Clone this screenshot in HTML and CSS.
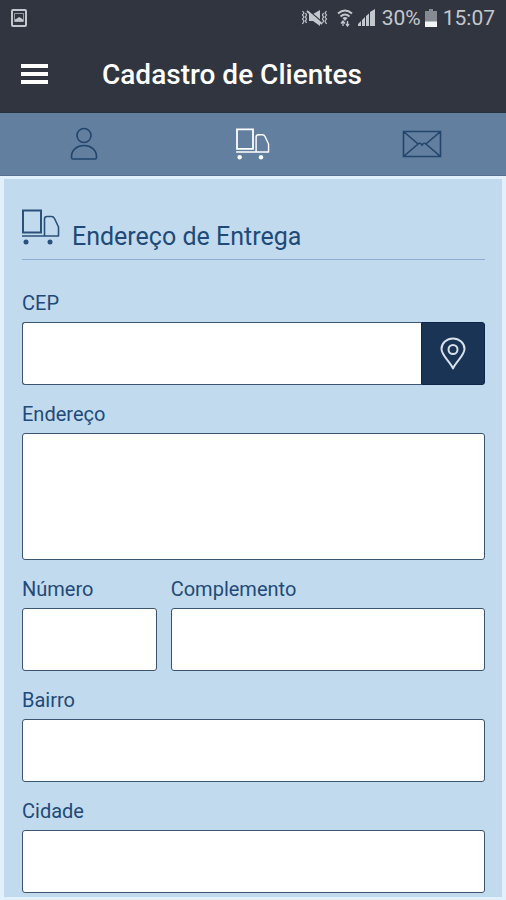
FILE: index.html
```html
<!DOCTYPE html>
<html lang="pt-BR">
<head>
<meta charset="utf-8">
<meta name="viewport" content="width=device-width, initial-scale=1">
<title>Cadastro de Clientes</title>
<link rel="stylesheet" href="styles.css">
</head>
<body>
<svg class="defs" aria-hidden="true">
  <symbol id="truck" viewBox="0 0 38 36">
    <path d="M1 1.500h18v22H1z" fill="none" stroke="currentColor" stroke-width="2"/>
    <path d="M0 27h36.500v-9l-4-8.500q-1-2-3-2H25q-2.500 0-2.500 2.500v17" fill="none" stroke="currentColor" stroke-width="1.600" stroke-linejoin="round"/>
    <circle cx="4" cy="33" r="2.500" fill="currentColor"/>
    <circle cx="28" cy="33" r="2.500" fill="currentColor"/>
  </symbol>
</svg>
<header class="header">
  <div class="status">
    <svg class="status-photo" width="16" height="18" viewBox="0 0 16 18"><rect x="1" y="1" width="14" height="16" rx="1" fill="none" stroke="currentColor" stroke-width="2"/><path d="M4 12.500v-2l2-1 2-1.500 2 1 2 1.500v2z" fill="currentColor"/><path d="M3.500 4.500h9v8h-9z" fill="none" stroke="currentColor" stroke-width=".7"/></svg>
    <svg width="27" height="18" viewBox="0 0 27 18" fill="none" stroke="currentColor"><path d="M1.500 2l1.500 2-1.500 2 1.500 2-1.500 2 1.500 2-1.500 3M4.500 4l1 2-1 2 1 2-1 2 1 2M25.500 2l-1.500 2 1.500 2-1.500 2 1.500 2-1.500 2 1.500 3M22.500 4l-1 2 1 2-1 2 1 2-1 2" stroke-width="1.200"/><path d="M8 5h4l7-4v16l-7-5H8z" fill="currentColor" stroke="none"/><path d="M7 1l14 12" stroke="#31353f" stroke-width="1.500"/><path d="M6 2l15 13" stroke-width="2"/></svg>
    <svg class="wifi" width="16" height="18" viewBox="0 0 16 18" fill="none" stroke="currentColor" stroke-width="2"><path d="M1 4.500q7-6 14 0M3.500 7.500q4.500-4 9 0"/><path d="M5.500 9q2.500-2 5 0L8 12z" fill="currentColor" stroke="none"/><path d="M6 12v5M4 14.500l2-2.500 2 2.500M10.500 12v5M9 15l1.500 2 1.500-2" stroke-width="1.300"/></svg>
    <svg class="signal" width="18" height="18" viewBox="0 0 18 18" fill="currentColor"><path d="M0 17v-2l3-3v5zM4 17v-6l3-3v9zM8 17V7l3-2.500V17zM12 17V3l5-3v17z"/></svg>
    <span class="battery-text">30%</span>
    <svg width="12" height="18" viewBox="0 0 12 18"><path d="M4 0h4v2h4v11H0V2h4z" fill="#858b90"/><path d="M0 12.500h12V18H0z" fill="#f2f4f5"/></svg>
    <time class="clock">15:07</time>
  </div>
  <div class="bar">
    <button class="menu" type="button" aria-label="Menu"><span></span><span></span><span></span></button>
    <h1>Cadastro de Clientes</h1>
  </div>
</header>
<nav class="tabs">
  <a href="#cliente" aria-label="Cliente"><svg width="28" height="34" viewBox="0 0 28 34" fill="none" stroke="currentColor" stroke-width="1.600"><circle cx="14" cy="8.500" r="7"/><path d="M1.500 29.500c0-6.500 5.500-11 12.500-11s12.500 4.500 12.500 11v1q0 1.500-1.500 1.500H3q-1.500 0-1.500-1.500z"/></svg></a>
  <a href="#entrega" class="active" aria-label="Entrega" aria-current="page"><svg width="34" height="32"><use href="#truck"/></svg></a>
  <a href="#contato" aria-label="Contato"><svg width="40" height="28" viewBox="0 0 40 28" fill="none" stroke="currentColor" stroke-width="1.600"><path d="M1.500 1.500h37v25h-37zl14.500 12.500L1.500 26.500M38.500 1.500L24 14l14.500 12.500M16 14q2-2 4 1 2-3 4-1"/></svg></a>
</nav>
<main class="page">
  <form class="card">
    <h2><svg width="38" height="36"><use href="#truck"/></svg><span>Endereço de Entrega</span></h2>
    <div class="field">
      <label for="cep">CEP</label>
      <div class="group">
        <input id="cep" type="text">
        <button class="locate" type="button" aria-label="Localizar"><svg width="26" height="33" viewBox="0 0 26 33" fill="none" stroke="currentColor" stroke-width="2"><path d="M13 31.500C10.500 25 1.500 18.500 1.500 12a11.500 10.500 0 0 1 23 0C24.500 18.500 15.500 25 13 31.500z" stroke-linejoin="round"/><circle cx="13" cy="12.500" r="4.500"/></svg></button>
      </div>
    </div>
    <div class="field">
      <label for="endereco">Endereço</label>
      <textarea id="endereco"></textarea>
    </div>
    <div class="row">
      <div class="field">
        <label for="numero">Número</label>
        <input id="numero" type="text">
      </div>
      <div class="field">
        <label for="complemento">Complemento</label>
        <input id="complemento" type="text">
      </div>
    </div>
    <div class="field">
      <label for="bairro">Bairro</label>
      <input id="bairro" type="text">
    </div>
    <div class="field">
      <label for="cidade">Cidade</label>
      <input id="cidade" type="text">
    </div>
  </form>
</main>
</body>
</html>
```
FILE: styles.css
```css
* { box-sizing: border-box; }
body {
  margin: 0;
  font-family: Roboto, "Liberation Sans", sans-serif;
  background: #e2f0fc;
  color: #1f4a78;
}
svg { display: block; flex: none; }
.defs { display: none; }
.header {
  background: #31353f;
  color: #fff;
  border-bottom: 1px solid #29313f;
}
.status {
  display: flex;
  align-items: center;
  height: 36px;
  padding: 0 11px;
  color: #c3c7ce;
  font-size: 21px;
}
.status-photo { margin-right: auto; }
.wifi { margin-left: 9px; }
.signal { margin-left: 5px; }
.battery-text { margin: 0 4px 0 6px; }
.clock { margin-left: 6px; }
.bar {
  display: flex;
  align-items: center;
  gap: 54px;
  height: 76px;
  padding: 0 21px;
}
.menu {
  display: grid;
  gap: 4px;
  width: 27px;
  padding: 0;
  border: 0;
  background: none;
}
.menu span { height: 4px; background: #fff; }
h1 {
  margin: 0;
  padding-top: 2px;
  font-size: 28px;
  font-weight: 500;
  line-height: 32px;
}
.tabs {
  display: grid;
  grid-template-columns: repeat(3, 1fr);
  height: 63px;
  background: #627f9f;
  border-bottom: 1px solid #58708f;
}
.tabs a {
  display: flex;
  align-items: center;
  justify-content: center;
  color: #23456c;
}
.tabs .active { color: #fff; }
.page { padding: 3px 4px; }
.card {
  display: grid;
  gap: 15px;
  padding: 30px 17px 4px 18px;
  background: #c2daee;
}
h2 {
  display: flex;
  gap: 12px;
  height: 51px;
  margin: 0 0 14px;
  border-bottom: 1px solid #8daed1;
  font-size: 25px;
  font-weight: 400;
  line-height: 32px;
}
h2 span { padding-top: 12px; }
h2 svg { color: #2b5079; }
.field { min-width: 0; }
label {
  display: block;
  margin-bottom: 5px;
  font-size: 20px;
  line-height: 28px;
}
input, textarea {
  display: block;
  width: 100%;
  height: 63px;
  margin: 0;
  padding: 8px 12px;
  border: 1px solid #3c5570;
  border-radius: 3px;
  background: #fff;
  color: inherit;
  font: inherit;
  font-size: 20px;
}
textarea { height: 127px; resize: none; }
.group { display: flex; }
.group input {
  flex: 1;
  min-width: 0;
  border-right: 0;
  border-radius: 3px 0 0 3px;
}
.locate {
  display: flex;
  align-items: center;
  justify-content: center;
  width: 64px;
  padding: 0;
  border: 1px solid #0d2546;
  border-radius: 0 3px 3px 0;
  background: #193454;
  color: #d8e0ea;
}
.row {
  display: grid;
  grid-template-columns: 3fr 7fr;
  gap: 14px;
}
```
